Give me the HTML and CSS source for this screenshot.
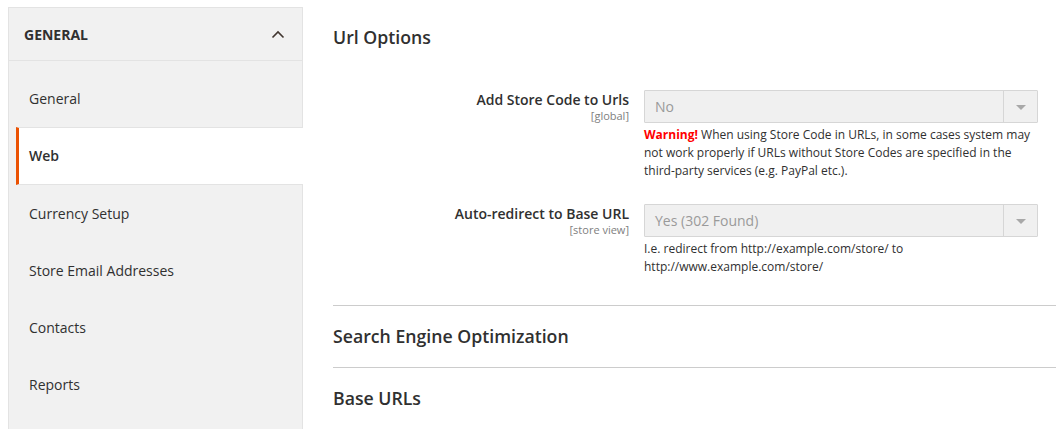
FILE: index.html
```html
<!DOCTYPE html>
<html lang="en">
<head>
    <meta charset="UTF-8">
    <title>Configuration - Web</title>
    <link rel="stylesheet" href="styles.css">
</head>
<body>

<div class="page">
    <div class="sidebar">
        <div class="sidebar-head">
            <span class="sidebar-title">General</span>
            <svg class="chevron" width="14" height="9" viewBox="0 0 14 9">
                <polyline points="1.5,7.5 7,2 12.5,7.5" fill="none" stroke="#41362f" stroke-width="1.6"/>
            </svg>
        </div>
        <ul class="nav">
            <li class="nav-item">General</li>
            <li class="nav-item active">Web</li>
            <li class="nav-item">Currency Setup</li>
            <li class="nav-item">Store Email Addresses</li>
            <li class="nav-item">Contacts</li>
            <li class="nav-item">Reports</li>
        </ul>
    </div>

    <div class="main">
        <h2 class="section-title first">Url Options</h2>

        <div class="row">
            <div class="label-cell">
                <div class="label">Add Store Code to Urls</div>
                <div class="scope">[global]</div>
            </div>
            <div class="control">
                <div class="select">
                    <span class="select-value">No</span>
                    <span class="select-arrow"></span>
                </div>
                <p class="note"><strong class="warn">Warning!</strong> When using Store Code in URLs, in some cases system may not work properly if URLs without Store Codes are specified in the third-party services (e.g. PayPal etc.).</p>
            </div>
        </div>

        <div class="row">
            <div class="label-cell">
                <div class="label">Auto-redirect to Base URL</div>
                <div class="scope">[store view]</div>
            </div>
            <div class="control">
                <div class="select">
                    <span class="select-value">Yes (302 Found)</span>
                    <span class="select-arrow"></span>
                </div>
                <p class="note">I.e. redirect from http://example.com/store/ to http://www.example.com/store/</p>
            </div>
        </div>

        <div class="section">
            <h2 class="section-title">Search Engine Optimization</h2>
        </div>
        <div class="section">
            <h2 class="section-title">Base URLs</h2>
        </div>
    </div>
</div>

</body>
</html>
```

FILE: styles.css
```css
body {
    margin: 0;
    padding: 0;
    font-family: 'Open Sans', 'Liberation Sans', sans-serif;
    color: #303030;
    background-color: #fff;
    overflow: hidden;
}

.page {
    display: flex;
    align-items: flex-start;
    padding: 7px 0 0 8px;
}

/* left navigation */
.sidebar {
    width: 293px;
    flex-shrink: 0;
    background-color: #f1f1f1;
    border: 1px solid #e3e3e3;
    border-bottom: none;
    min-height: 430px;
}

.sidebar-head {
    display: flex;
    justify-content: space-between;
    align-items: center;
    height: 52px;
    padding: 0 16px 0 15px;
    border-bottom: 1px solid #e3e3e3;
}

.sidebar-title {
    font-size: 14px;
    font-weight: 700;
    text-transform: uppercase;
    color: #303030;
}

.chevron {
    margin-right: 1px;
}

.nav {
    list-style: none;
    margin: 0;
    padding: 9px 0 0 7px;
}

.nav-item {
    height: 57px;
    line-height: 57px;
    font-size: 14px;
    padding-left: 10px;
    border-left: 3px solid transparent;
    color: #303030;
}

.nav-item.active {
    background-color: #fff;
    border-left-color: #eb5202;
    border-top: 1px solid #e3e3e3;
    border-bottom: 1px solid #e3e3e3;
    height: 56px;
    line-height: 56px;
    margin-right: -1px;
    font-weight: 600;
}

/* main column */
.main {
    flex: 1;
    margin-left: 30px;
}

.section-title {
    margin: 0;
    font-size: 17.7px;
    font-weight: 600;
    line-height: 22px;
    color: #303030;
}

.section-title.first {
    margin-top: 19px;
    margin-bottom: 42px;
}

.row {
    display: grid;
    grid-template-columns: 296px 394px 1fr;
    column-gap: 15px;
    margin-bottom: 24px;
}

.label-cell {
    text-align: right;
    padding-top: 1px;
}

.label {
    font-size: 14px;
    font-weight: 600;
    line-height: 18px;
}

.scope {
    font-size: 11px;
    line-height: 14px;
    color: #808080;
}

.select {
    display: flex;
    height: 31px;
    border: 1px solid #d6d6d6;
    background-color: #f0f0f0;
    border-radius: 1px;
}

.select-value {
    flex: 1;
    padding-left: 10px;
    font-size: 14px;
    line-height: 31px;
    color: #9a9a9a;
}

.select-arrow {
    width: 33px;
    border-left: 1px solid #d6d6d6;
    position: relative;
}

.select-arrow::after {
    content: "";
    position: absolute;
    left: 12px;
    top: 14px;
    border-left: 5px solid transparent;
    border-right: 5px solid transparent;
    border-top: 5px solid #a8a8a8;
}

.note {
    margin: 3px 0 0;
    font-size: 12px;
    line-height: 18px;
    color: #303030;
}

.warn {
    color: #ff0000;
    font-weight: 700;
}

.section {
    border-top: 1px solid #cccccc;
    padding: 19px 0 20px;
}

.row + .section {
    margin-top: 29px;
}
```
